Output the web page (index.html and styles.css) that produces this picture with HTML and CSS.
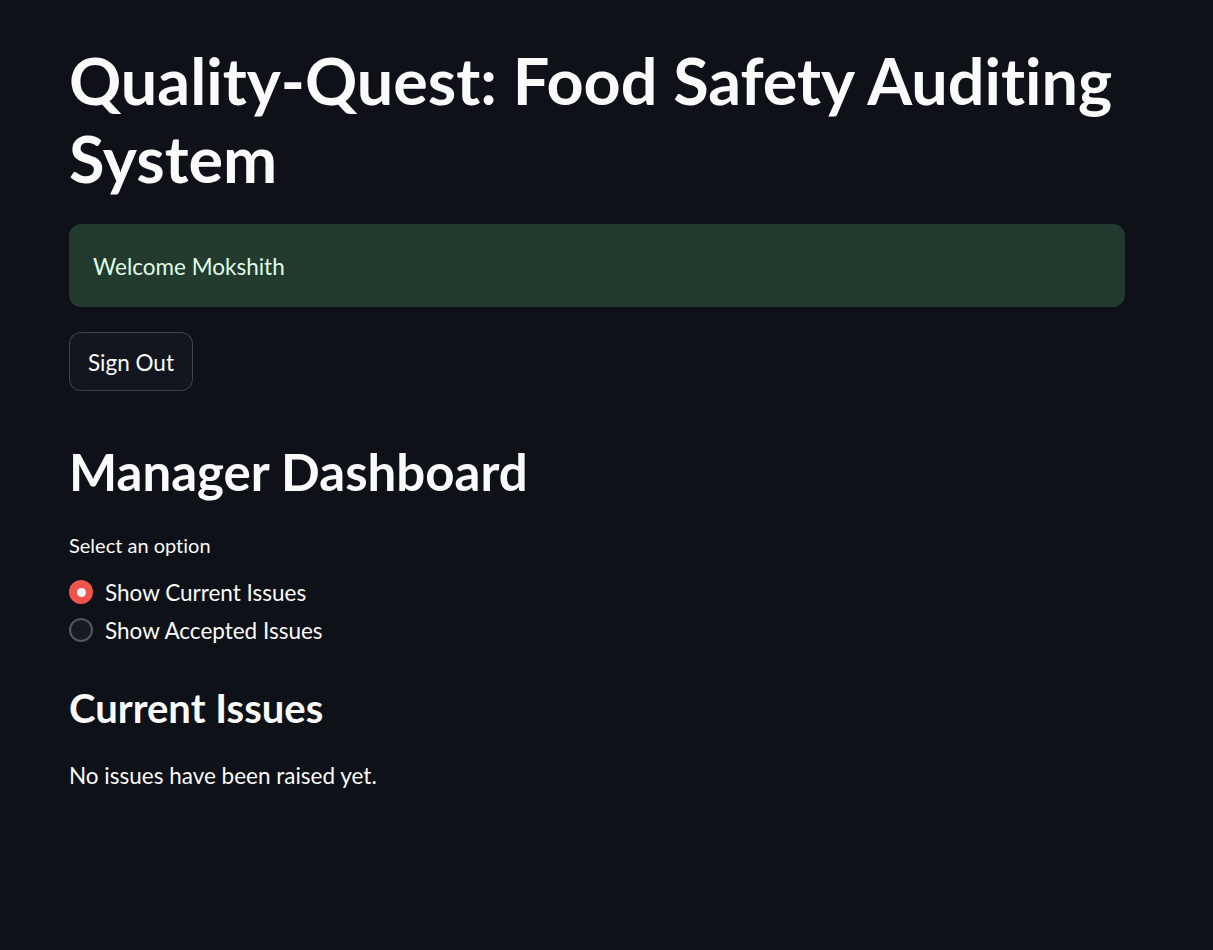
FILE: index.html
```html
<!DOCTYPE html>
<html lang="en">
<head>
<meta charset="utf-8">
<title>Quality-Quest</title>
<link rel="stylesheet" href="styles.css">
</head>
<body>
<main class="main">
  <h1 class="title">Quality-Quest: Food Safety Auditing System</h1>
  <div class="alert-success">Welcome Mokshith</div>
  <button class="btn" type="button">Sign Out</button>
  <h2 class="h2">Manager Dashboard</h2>
  <div class="radio-group">
    <div class="radio-label">Select an option</div>
    <label class="radio-row">
      <span class="radio radio-on"><span class="radio-dot"></span></span>
      <span class="radio-text">Show Current Issues</span>
    </label>
    <label class="radio-row">
      <span class="radio radio-off"></span>
      <span class="radio-text">Show Accepted Issues</span>
    </label>
  </div>
  <h3 class="h3">Current Issues</h3>
  <p class="text">No issues have been raised yet.</p>
</main>
</body>
</html>
```

FILE: styles.css
```css
html, body {
  margin: 0;
  padding: 0;
  background: #0e1117;
}
body {
  color: #fafafa;
  font-family: Lato, "Noto Sans", sans-serif;
  font-variant-ligatures: none;
  width: 1213px;
  min-height: 950px;
}
.main {
  padding: 41px 0 0 69px;
  width: 1056px;
}
.title {
  margin: 0;
  font-size: 64.7px;
  font-weight: 700;
  line-height: 78px;
}
.alert-success {
  margin-top: 27px;
  padding: 25px 24px 23px;
  line-height: 35px;
  font-size: 22.5px;
  color: #dffde9;
  background: #233a2e;
  border-radius: 12px;
}
.btn {
  display: block;
  margin-top: 25px;
  height: 59px;
  padding: 1px 18px 0;
  font-family: inherit;
  font-variant-ligatures: none;
  font-size: 22.5px;
  color: #fafafa;
  background: #13161e;
  border: 1px solid rgba(250, 250, 250, 0.2);
  border-radius: 12px;
}
.h2 {
  margin: 50px 0 0;
  font-size: 51px;
  font-weight: 700;
  line-height: 62px;
}
.radio-label {
  margin-top: 28px;
  font-size: 20px;
  line-height: 28px;
}
.radio-group .radio-row:first-of-type {
  margin-top: 14px;
}
.radio-row {
  display: flex;
  align-items: center;
  gap: 12px;
  height: 38px;
  font-size: 22.5px;
  line-height: 38px;
}
.radio-text {
  padding-top: 1px;
}
.radio {
  box-sizing: border-box;
  width: 24px;
  height: 24px;
  border-radius: 50%;
  display: flex;
  align-items: center;
  justify-content: center;
  flex: none;
}
.radio-on {
  background: #f0544f;
}
.radio-dot {
  width: 9px;
  height: 9px;
  border-radius: 50%;
  background: #f3f4f6;
}
.radio-off {
  background: #171a22;
  border: 2px solid #53565d;
}
.h3 {
  margin: 34px 0 0;
  font-size: 40px;
  font-weight: 700;
  line-height: 50px;
}
.text {
  margin: 25px 0 0;
  font-size: 22.5px;
  line-height: 35px;
}
```
